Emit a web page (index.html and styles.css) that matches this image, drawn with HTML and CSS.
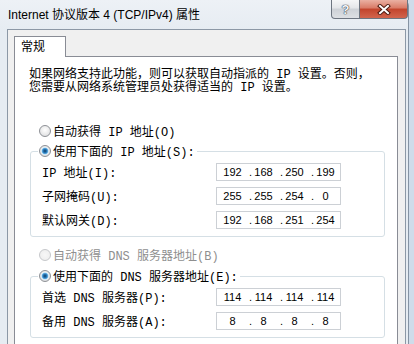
FILE: index.html
```html
<!DOCTYPE html>
<html lang="zh-CN">
<head>
  <meta charset="UTF-8">
  <title>Internet 协议版本 4 (TCP/IPv4) 属性</title>
  <link rel="stylesheet" href="styles.css">
</head>
<body>
<div class="window">
  <div class="titlebar">
    <span class="title">Internet 协议版本 4 (TCP/IPv4) 属性</span>
    <div class="caption">
      <button class="cap help">?</button>
      <button class="cap close">
        <svg width="14" height="11" viewBox="0 0 14 11">
          <path d="M3 2 L11 9 M11 2 L3 9" stroke="#4d1a10" stroke-width="4" stroke-linecap="square" fill="none"/>
          <path d="M3 2 L11 9 M11 2 L3 9" stroke="#ffffff" stroke-width="2" stroke-linecap="square" fill="none"/>
        </svg>
      </button>
    </div>
  </div>

  <div class="client">
    <div class="tabs">
      <div class="tab">常规</div>
    </div>
    <div class="panel">
      <p class="intro">如果网络支持此功能，则可以获取自动指派的 IP 设置。否则，<br>您需要从网络系统管理员处获得适当的 IP 设置。</p>

      <label class="radio top"><span class="knob"></span>自动获得 IP 地址(O)</label>
      <fieldset class="group first">
        <legend><label class="radio checked"><span class="knob"></span>使用下面的 IP 地址(S):</label></legend>
        <div class="row">
          <span class="label">IP 地址(I):</span>
          <div class="ip"><span class="seg"><i>.</i><b>192</b></span><span class="seg"><i>.</i><b>168</b></span><span class="seg"><i>.</i><b>250</b></span><span class="seg"><i>.</i><b>199</b></span></div>
        </div>
        <div class="row">
          <span class="label">子网掩码(U):</span>
          <div class="ip"><span class="seg"><i>.</i><b>255</b></span><span class="seg"><i>.</i><b>255</b></span><span class="seg"><i>.</i><b>254</b></span><span class="seg"><i>.</i><b>0</b></span></div>
        </div>
        <div class="row">
          <span class="label">默认网关(D):</span>
          <div class="ip"><span class="seg"><i>.</i><b>192</b></span><span class="seg"><i>.</i><b>168</b></span><span class="seg"><i>.</i><b>251</b></span><span class="seg"><i>.</i><b>254</b></span></div>
        </div>
      </fieldset>

      <label class="radio top disabled"><span class="knob"></span>自动获得 DNS 服务器地址(B)</label>
      <fieldset class="group second">
        <legend><label class="radio checked"><span class="knob"></span>使用下面的 DNS 服务器地址(E):</label></legend>
        <div class="row">
          <span class="label">首选 DNS 服务器(P):</span>
          <div class="ip"><span class="seg"><i>.</i><b>114</b></span><span class="seg"><i>.</i><b>114</b></span><span class="seg"><i>.</i><b>114</b></span><span class="seg"><i>.</i><b>114</b></span></div>
        </div>
        <div class="row">
          <span class="label">备用 DNS 服务器(A):</span>
          <div class="ip"><span class="seg"><i>.</i><b>8</b></span><span class="seg"><i>.</i><b>8</b></span><span class="seg"><i>.</i><b>8</b></span><span class="seg"><i>.</i><b>8</b></span></div>
        </div>
      </fieldset>
    </div>
  </div>
</div>
</body>
</html>
```

FILE: styles.css
```css
:root {
  --frame: #e6ecf2;
  --tab-border: #898c95;
  --group-border: #d5dfe5;
  --edit-border: #ccd0d5;
  --disabled: #8f8f8f;
}

body {
  margin: 0;
  width: 414px;
  height: 344px;
  overflow: hidden;
  background: #cfdcea;
  color: #000;
  font-family: "Liberation Mono", "Noto Sans CJK SC", monospace;
  font-size: 12px;
}

.window {
  width: 409px;
  height: 344px;
  box-sizing: border-box;
  border-right: 1px solid #8593a3;
  border-top-right-radius: 6px;
  background: linear-gradient(#edf1f6, var(--frame) 30px);
}

/* title bar */
.titlebar {
  height: 29px;
  display: flex;
  align-items: flex-start;
}

.title {
  padding: 7px 0 0 8px;
  font: 12px/16px "Liberation Sans", "Noto Sans CJK SC", sans-serif;
}

.caption {
  margin-left: auto;
  display: flex;
}

.cap {
  height: 19px;
  padding: 0;
  border: 1px solid #6d7580;
  border-top: none;
  display: flex;
  align-items: center;
  justify-content: center;
}

.help {
  width: 29px;
  border-radius: 0 0 0 4px;
  background: linear-gradient(#f5f6f7, #e4e6e9 45%, #cdd1d6 50%, #dde0e4);
  color: #f4f6f8;
  font: bold 13px/1 "Liberation Sans", sans-serif;
  text-shadow: 0 0 1px #3e4650, 0 0 1px #3e4650, 0 0 1px #3e4650;
}

.close {
  width: 48px;
  border-left: none;
  border-radius: 0 0 4px 0;
  background: linear-gradient(#eab0a2, #d97a66 45%, #c2442c 50%, #d2654d);
}

/* client area */
.client {
  margin-left: 7px;
  width: 399px;
  height: 315px;
  box-sizing: border-box;
  border: 1px solid #8c98a6;
  border-bottom: none;
  background: #f0f0f0;
  padding: 6px 7px 0 6px;
}

.tabs {
  display: flex;
}

.tab {
  position: relative;
  z-index: 1;
  width: 52px;
  box-sizing: border-box;
  height: 21px;
  margin-bottom: -1px;
  border: 1px solid var(--tab-border);
  border-bottom: none;
  background: #fff;
  padding: 0 0 3px 6px;
  font: 12px/17px "Noto Sans CJK SC", sans-serif;
}

.panel {
  height: 300px;
  border: 1px solid var(--tab-border);
  background: #fff;
}

.intro {
  margin: 12px 0 0 14px;
  line-height: 13px;
  white-space: nowrap;
}

/* radio buttons */
.radio {
  display: flex;
  align-items: center;
  height: 16px;
  white-space: nowrap;
}

.radio.top {
  margin-left: 24px;
}

.intro + .radio {
  margin-top: 28px;
}

.radio.disabled {
  margin-top: 10px;
  color: var(--disabled);
}

.knob {
  width: 12px;
  height: 12px;
  box-sizing: border-box;
  margin-right: 2px;
  border-radius: 50%;
  border: 1px solid #8e9196;
  background: radial-gradient(circle at 50% 40%, #ffffff 0, #f2f2f2 35%, #d6d8db 100%);
}

.checked .knob {
  background:
    radial-gradient(circle, #0e3d66 0, #2b7cbc 2px, #6fb8e8 3px, #d9ecf8 3.6px, transparent 4px),
    radial-gradient(circle at 50% 40%, #ffffff 0, #eeeeee 40%, #d4d6d9 100%);
}

.disabled .knob {
  border-color: #c6c8cb;
  background: radial-gradient(circle, #f7f7f7 0, #ececec 100%);
}

/* group boxes */
.group {
  margin: 4px 12px 0 15px;
  padding: 4px 0 7px 7px;
  border: 1px solid var(--group-border);
  border-radius: 3px;
}

.group.second {
  margin-top: 5px;
}

.group legend {
  padding: 0 2px 0 1px;
}

.row {
  display: flex;
  align-items: center;
  height: 18px;
  padding-left: 4px;
}

.row + .row {
  margin-top: 6px;
}

.label {
  width: 174px;
  white-space: nowrap;
}

/* ip address fields */
.ip {
  display: grid;
  grid-template-columns: 31px 31px 31px 30px;
  width: 125px;
  height: 18px;
  box-sizing: border-box;
  border: 1px solid var(--edit-border);
  font: 11px/16px "Liberation Sans", sans-serif;
}

.seg {
  display: flex;
}

.seg i {
  width: 5px;
  font-style: normal;
  text-align: center;
}

.seg:first-child i {
  visibility: hidden;
}

.seg b {
  width: 21px;
  font-weight: normal;
  text-align: center;
}
```
